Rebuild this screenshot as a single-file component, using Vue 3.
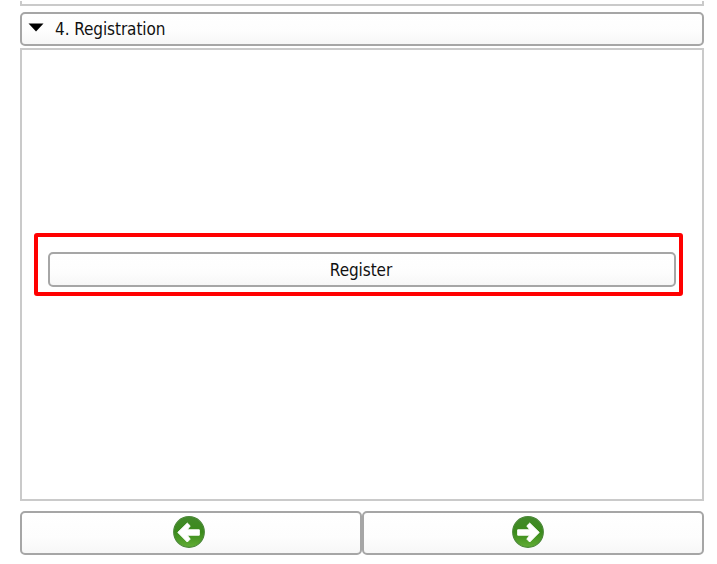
<script setup>
const arrows = [
  { id: 'previous', label: 'Previous step', flip: false },
  { id: 'next', label: 'Next step', flip: true },
]
</script>

<template>
  <main class="wizard">
    <div class="previous-panel"></div>
    <button class="btn section-header">
      <svg class="caret" width="16" height="9" viewBox="0 0 16 9"><path d="M.5.5h15L8 8.5z" fill="#000" /></svg>
      <span class="title">4. Registration</span>
    </button>
    <section class="panel">
      <div class="highlight">
        <button class="btn register"><span class="register-label">Register</span></button>
      </div>
    </section>
    <nav class="steps">
      <button v-for="a in arrows" :key="a.id" class="btn step" :class="a.id" :aria-label="a.label">
        <svg class="arrow" :class="{ flip: a.flip }" width="34" height="34" viewBox="0 0 34 34">
          <defs>
            <linearGradient :id="'fill-' + a.id" x1="0" y1="0" x2="0" y2="1">
              <stop offset="0" stop-color="#438a2b" />
              <stop offset=".5" stop-color="#3a8a1b" />
              <stop offset="1" stop-color="#62ad35" />
            </linearGradient>
          </defs>
          <circle cx="17" cy="17" r="15.3" :fill="`url(#fill-${a.id})`" stroke="#4a8737" stroke-width="1.2" />
          <path d="M5.8 17.4 15.3 8.1 18.2 10.9 15.2 14.8H27.3v5.4H15.2l3 3.9-2.9 2.9z" fill="#fff" stroke="#fff" stroke-width="1" stroke-linejoin="round" />
        </svg>
      </button>
    </nav>
  </main>
</template>

<style>
body {
  margin: 0;
  background: #fff;
}
</style>

<style scoped>
.wizard {
  box-sizing: border-box;
  width: 717px;
  height: 564px;
  padding: 1px 13px 0 20px;
  overflow: hidden;
  display: flex;
  flex-direction: column;
  font-family: "DejaVu Sans Condensed", "DejaVu Sans", sans-serif;
  color: #111;
}
.previous-panel {
  box-sizing: border-box;
  height: 5px;
  flex: none;
  border: solid #cacaca;
  border-width: 0 2px 2px;
}
.btn {
  box-sizing: border-box;
  margin: 0;
  padding: 0;
  border: 2px solid #a6a6a6;
  border-radius: 5px;
  background: linear-gradient(#fff 0%, #fdfdfd 60%, #f7f7f7 100%);
  font: inherit;
  font-size: 17px;
  color: inherit;
  display: flex;
  align-items: center;
}
.section-header {
  flex: none;
  height: 34px;
  margin-top: 6px;
  padding-left: 6px;
}
.caret {
  margin-bottom: 4px;
}
.title {
  margin-left: 11px;
  letter-spacing: -0.08px;
}
.panel {
  box-sizing: border-box;
  flex: none;
  height: 453px;
  margin-top: 2px;
  padding: 183px 19px 0 12px;
  border: 2px solid #cacaca;
}
.highlight {
  box-sizing: border-box;
  height: 63px;
  padding: 15px 3px 0 10px;
  border: 4px solid #f00;
  border-radius: 3px;
}
.register {
  width: 100%;
  height: 35px;
  justify-content: center;
}
.register-label {
  margin-right: 2px;
  letter-spacing: -0.08px;
}
.steps {
  display: flex;
  margin-top: 10px;
}
.step {
  flex: 1;
  height: 44px;
  justify-content: center;
}
.arrow {
  margin-right: 4px;
  margin-bottom: 2px;
}
.next .arrow {
  margin-right: 10px;
}
.flip {
  transform: scaleX(-1);
}
</style>
